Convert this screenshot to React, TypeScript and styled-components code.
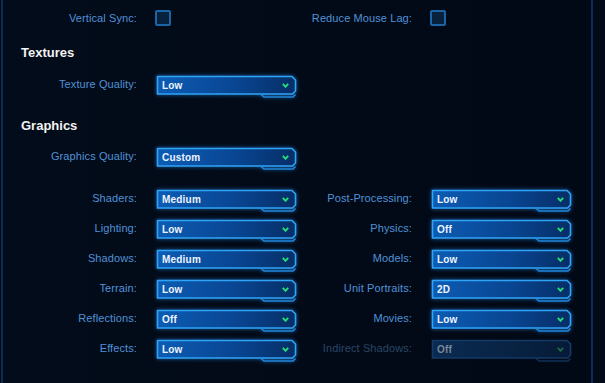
import styled, { createGlobalStyle } from "styled-components";

const GlobalStyle = createGlobalStyle`
  html, body {
    margin: 0;
    padding: 0;
    background: #020a17;
  }
  body {
    font-family: "Liberation Sans", Arial, sans-serif;
  }
`;

// 画面全体の設定
const leftRows = [
  { label: "Shaders:", value: "Medium" },
  { label: "Lighting:", value: "Low" },
  { label: "Shadows:", value: "Medium" },
  { label: "Terrain:", value: "Low" },
  { label: "Reflections:", value: "Off" },
  { label: "Effects:", value: "Low" },
];

const rightRows = [
  { label: "Post-Processing:", value: "Low" },
  { label: "Physics:", value: "Off" },
  { label: "Models:", value: "Low" },
  { label: "Unit Portraits:", value: "2D" },
  { label: "Movies:", value: "Low" },
  { label: "Indirect Shadows:", value: "Off", disabled: true },
];

function SelectFrame({ disabled }: { disabled?: boolean }) {
  const id = disabled ? "selBodyOff" : "selBody";
  return (
    <SFrame viewBox="0 0 141 23" width="141" height="23" $disabled={disabled}>
      <defs>
        <linearGradient id={id} x1="0" y1="0" x2="1" y2="0">
          <stop offset="0" stopColor={disabled ? "#0a2b52" : "#0c5cb4"} />
          <stop offset="0.55" stopColor={disabled ? "#082344" : "#094693"} />
          <stop offset="1" stopColor={disabled ? "#061a36" : "#062e66"} />
        </linearGradient>
      </defs>
      <path
        d="M1.5 1.5 H136 L139.5 5 V16 L136.5 19 H1.5 Z"
        fill={`url(#${id})`}
        stroke={disabled ? "#143a66" : "#2fa3f6"}
        strokeWidth="1.6"
      />
      <path
        d="M105 19.5 L108 22 H137 L139.5 19.5"
        fill="none"
        stroke={disabled ? "#10305a" : "#1f86dc"}
        strokeWidth="1.6"
      />
    </SFrame>
  );
}

function Select({ value, disabled }: { value: string; disabled?: boolean }) {
  return (
    <SSelect>
      <SelectFrame disabled={disabled} />
      <SValue $disabled={disabled}>{value}</SValue>
      <SChevron viewBox="0 0 7 5" width="7" height="5" $disabled={disabled}>
        <path d="M0.8 0.8 L3.5 3.8 L6.2 0.8" fill="none" strokeWidth="1.8" />
      </SChevron>
    </SSelect>
  );
}

function Field({
  label,
  value,
  wide,
  disabled,
}: {
  label: string;
  value: string;
  wide?: boolean;
  disabled?: boolean;
}) {
  return (
    <SField>
      <SLabel $w={wide ? 134 : 115} $disabled={disabled}>
        {label}
      </SLabel>
      <Select value={value} disabled={disabled} />
    </SField>
  );
}

export default function App() {
  return (
    <>
      <GlobalStyle />
      <SScreen>
        <SPanel>
          <SCheckRow>
            <SField>
              <SCheckLabel $w={134}>Vertical Sync:</SCheckLabel>
              <SCheckbox />
            </SField>
            <SField>
              <SCheckLabel $w={115}>Reduce Mouse Lag:</SCheckLabel>
              <SCheckbox />
            </SField>
          </SCheckRow>

          <SHeading $top={19}>Textures</SHeading>
          <SSingleRow $top={14}>
            <Field label="Texture Quality:" value="Low" wide />
          </SSingleRow>

          <SHeading $top={20}>Graphics</SHeading>
          <SSingleRow $top={13}>
            <Field label="Graphics Quality:" value="Custom" wide />
          </SSingleRow>

          <SGrid>
            {leftRows.map((l, i) => {
              const r = rightRows[i];
              return (
                <SPair key={l.label}>
                  <Field label={l.label} value={l.value} wide />
                  <Field label={r.label} value={r.value} disabled={r.disabled} />
                </SPair>
              );
            })}
          </SGrid>
        </SPanel>
      </SScreen>
    </>
  );
}

//見た目
const SScreen = styled.div`
  width: 605px;
  height: 383px;
  overflow: hidden;
  background: #020a17;
  display: flex;
`;

const SPanel = styled.div`
  margin-left: 1px;
  width: 592px;
  height: 383px;
  box-sizing: border-box;
  border-left: 2px solid #0c2a4e;
  border-right: 2px solid #0a2b5c;
  background: linear-gradient(90deg, #030c1a 0%, #020a17 60%, #020916 100%);
  padding-top: 10px;
  display: flex;
  flex-direction: column;
`;

const SCheckRow = styled.div`
  display: flex;
  flex-direction: row;
  height: 16px;
  align-items: center;
`;

const SField = styled.div`
  display: flex;
  flex-direction: row;
  align-items: flex-start;
`;

const SLabel = styled.div<{ $w: number; $disabled?: boolean }>`
  width: ${(p) => p.$w}px;
  margin-right: 19px;
  text-align: right;
  font-size: 11px;
  line-height: 18px;
  letter-spacing: 0.1px;
  color: ${(p) => (p.$disabled ? "#284766" : "#5092d8")};
  white-space: nowrap;
`;

const SCheckLabel = styled(SLabel)`
  line-height: 16px;
  margin-right: 18px;
`;

const SCheckbox = styled.div`
  width: 16px;
  height: 16px;
  box-sizing: border-box;
  border: 2px solid #1c64a8;
  border-radius: 2px;
  background: #08223e;
  margin-right: 126px;
`;

const SHeading = styled.div<{ $top: number }>`
  margin-top: ${(p) => p.$top}px;
  padding-left: 18px;
  font-size: 13px;
  font-weight: bold;
  line-height: 16px;
  color: #f2f2f2;
`;

const SSingleRow = styled.div<{ $top: number }>`
  margin-top: ${(p) => p.$top}px;
  display: flex;
`;

const SGrid = styled.div`
  margin-top: 19px;
  display: flex;
  flex-direction: column;
  gap: 7px;
`;

const SPair = styled.div`
  display: flex;
  flex-direction: row;
`;

const SSelect = styled.div`
  position: relative;
  width: 141px;
  height: 23px;
  display: flex;
  flex-direction: row;
  align-items: flex-start;
`;

const SFrame = styled.svg<{ $disabled?: boolean }>`
  position: absolute;
  left: 0;
  top: 0;
  filter: ${(p) =>
    p.$disabled ? "none" : "drop-shadow(0 0 2px rgba(40, 150, 255, 0.6))"};
`;

const SValue = styled.div<{ $disabled?: boolean }>`
  position: relative;
  padding-left: 6px;
  font-size: 10px;
  font-weight: bold;
  line-height: 21px;
  letter-spacing: 0.2px;
  color: ${(p) => (p.$disabled ? "#7b8896" : "#eef4ff")};
`;

const SChevron = styled.svg<{ $disabled?: boolean }>`
  position: relative;
  margin-left: auto;
  margin-right: 8px;
  margin-top: 8px;
  stroke: ${(p) => (p.$disabled ? "#1d6a48" : "#22e27a")};
`;
